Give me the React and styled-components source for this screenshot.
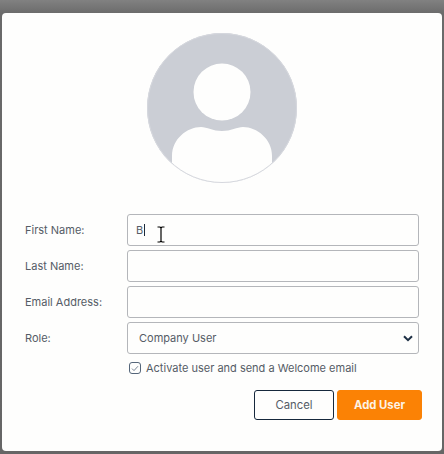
import React from "react";
import styled, { createGlobalStyle } from "styled-components";

const GlobalStyle = createGlobalStyle`
  html, body {
    margin: 0;
    padding: 0;
    overflow: hidden;
  }
`;

const Backdrop = styled.div`
  box-sizing: border-box;
  width: 444px;
  height: 454px;
  padding: 13px 2px 3px 2px;
  background: linear-gradient(#818181 0, #747474 8px, #6a6a6a 14px, #666666 100%);
  font-family: Inter, "Liberation Sans", sans-serif;
`;

const Modal = styled.div`
  box-sizing: border-box;
  height: 100%;
  background-color: #fefefd;
  border-radius: 4px;
  padding: 20px 20px 0 23px;
  display: flex;
  flex-direction: column;
`;

const AvatarWrap = styled.div`
  display: flex;
  justify-content: center;
  margin: 0 3px 31px 0;
`;

const Avatar = styled.svg`
  display: block;
  width: 150px;
  height: 150px;
`;

const Form = styled.div`
  display: flex;
  flex-direction: column;
  gap: 4px;
`;

const Row = styled.div`
  display: grid;
  grid-template-columns: 102px 292px;
  align-items: center;
  position: relative;
`;

const Label = styled.label`
  font-size: 11px;
  color: #555c66;
`;

const Field = styled.div`
  box-sizing: border-box;
  height: 32px;
  border: 1px solid #b4b6ba;
  border-radius: 3px;
  background-color: #fefefd;
  display: flex;
  align-items: center;
  justify-content: space-between;
  padding: 0 ${(props) => (props.$select ? "5px" : "8px")} 0 ${(props) => (props.$select ? "11px" : "8px")};
  font-size: 11px;
  color: #555c66;
`;

const Caret = styled.span`
  width: 1px;
  height: 12px;
  margin-left: 1px;
  background-color: #1d2a3a;
`;

const Typed = styled.div`
  display: flex;
  align-items: center;
`;

const Cursor = styled.svg`
  position: absolute;
  left: 132px;
  top: 12px;
  width: 8px;
  height: 17px;
`;

const CheckRow = styled.div`
  display: flex;
  align-items: center;
  gap: 5px;
  margin: 7px 0 0 104px;
  font-size: 11px;
  color: #555c66;
`;

const CheckBox = styled.span`
  box-sizing: border-box;
  width: 12px;
  height: 12px;
  border: 1px solid #55667a;
  border-radius: 3px;
  display: flex;
  align-items: center;
  justify-content: center;
`;

const Actions = styled.div`
  display: flex;
  justify-content: flex-end;
  gap: 3px;
  margin-top: 15px;
`;

const Button = styled.button`
  box-sizing: border-box;
  height: 30px;
  width: ${(props) => props.$width}px;
  border-radius: 3px;
  font-family: inherit;
  font-size: 11.3px;
  font-weight: ${(props) => (props.$primary ? 700 : 400)};
  color: ${(props) => (props.$primary ? "#fdf3e6" : "#555c66")};
  background-color: ${(props) => (props.$primary ? "#fb8205" : "#fefefd")};
  border: 1px solid ${(props) => (props.$primary ? "#fb8205" : "#16283c")};
  padding: 0;
`;

function App() {
  return (
    <>
      <GlobalStyle />
      <Backdrop>
        <Modal>
          <AvatarWrap>
            <Avatar viewBox="0 0 150 150">
              <defs>
                <clipPath id="avatar-clip">
                  <circle cx="75" cy="75" r="75" />
                </clipPath>
              </defs>
              <circle cx="75" cy="75" r="75" fill="#cbced5" />
              <g clipPath="url(#avatar-clip)" fill="#fefefd">
                <circle cx="75" cy="59" r="28.5" />
                <path d="M25 150 V123 C25 106 40 94 54 94 C60 94 66 98 75 98 C84 98 90 94 96 94 C110 94 125 106 125 123 V150 Z" />
              </g>
              <circle cx="75" cy="75" r="74.5" fill="none" stroke="#d6d8de" strokeWidth="1" />
            </Avatar>
          </AvatarWrap>
          <Form>
            <Row>
              <Label>First Name:</Label>
              <Field>
                <Typed>
                  B
                  <Caret />
                </Typed>
              </Field>
              <Cursor viewBox="0 0 8 17">
                <path d="M0.5 1 H3 L4 2 L5 1 H7.5 M4 2 V15 M0.5 16 H3 L4 15 L5 16 H7.5" fill="none" stroke="#000000" strokeWidth="1.2" />
              </Cursor>
            </Row>
            <Row>
              <Label>Last Name:</Label>
              <Field />
            </Row>
            <Row>
              <Label>Email Address:</Label>
              <Field />
            </Row>
            <Row>
              <Label>Role:</Label>
              <Field $select>
                Company User
                <svg width="10" height="7" viewBox="0 0 10 7">
                  <path d="M1 1.2 L5 5.2 L9 1.2" fill="none" stroke="#1d2f44" strokeWidth="2" />
                </svg>
              </Field>
            </Row>
          </Form>
          <CheckRow>
            <CheckBox>
              <svg width="8" height="7" viewBox="0 0 8 7">
                <path d="M1 3.6 L3 5.6 L7 1.2" fill="none" stroke="#55667a" strokeWidth="0.8" />
              </svg>
            </CheckBox>
            Activate user and send a Welcome email
          </CheckRow>
          <Actions>
            <Button $width={80}>Cancel</Button>
            <Button $width={85} $primary>
              Add User
            </Button>
          </Actions>
        </Modal>
      </Backdrop>
    </>
  );
}

export default App;
